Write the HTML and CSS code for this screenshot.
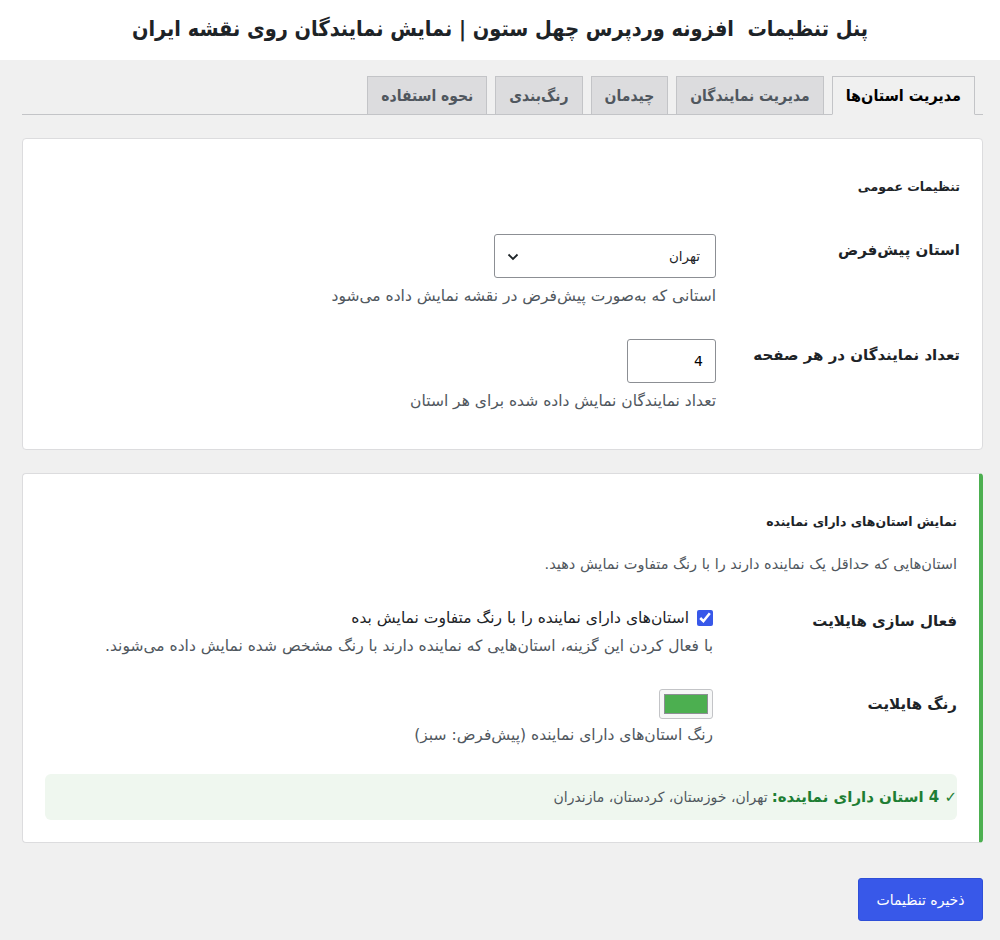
FILE: index.html
```html
<!DOCTYPE html>
<html lang="fa" dir="rtl">
<head>
    <meta charset="UTF-8">
    <title>پنل تنظیمات</title>
    <link rel="stylesheet" href="styles.css">
</head>
<body>

    <header class="page-head">
        <h1>پنل تنظیمات&nbsp; افزونه وردپرس چهل ستون | نمایش نمایندگان روی نقشه ایران</h1>
    </header>

    <main class="wrap">
        <nav class="nav-tabs">
            <a class="nav-tab active" href="#">مدیریت استان‌ها</a>
            <a class="nav-tab" href="#">مدیریت نمایندگان</a>
            <a class="nav-tab" href="#">چیدمان</a>
            <a class="nav-tab" href="#">رنگ‌بندی</a>
            <a class="nav-tab" href="#">نحوه استفاده</a>
        </nav>

        <form>
            <section class="card">
                <h2>تنظیمات عمومی</h2>

                <div class="field-row">
                    <label class="field-label" for="default-province">استان پیش‌فرض</label>
                    <div class="field-control">
                        <div class="select-box">
                            <select id="default-province">
                                <option>تهران</option>
                                <option>خوزستان</option>
                                <option>کردستان</option>
                                <option>مازندران</option>
                            </select>
                            <svg class="chevron" width="12" height="8" viewBox="0 0 12 8"><path d="M1.5 1.5 6 6l4.5-4.5" fill="none" stroke="#1d2327" stroke-width="1.8"/></svg>
                        </div>
                        <p class="desc">استانی که به‌صورت پیش‌فرض در نقشه نمایش داده می‌شود</p>
                    </div>
                </div>

                <div class="field-row">
                    <label class="field-label" for="per-page">تعداد نمایندگان در هر صفحه</label>
                    <div class="field-control">
                        <input class="num-input" id="per-page" type="text" value="4">
                        <p class="desc">تعداد نمایندگان نمایش داده شده برای هر استان</p>
                    </div>
                </div>
            </section>

            <section class="card card-accent">
                <h2>نمایش استان‌های دارای نماینده</h2>
                <p class="card-intro">استان‌هایی که حداقل یک نماینده دارند را با رنگ متفاوت نمایش دهید.</p>

                <div class="field-row row-check">
                    <span class="field-label">فعال سازی هایلایت</span>
                    <div class="field-control">
                        <label class="check-line">
                            <input type="checkbox" checked>
                            <span>استان‌های دارای نماینده را با رنگ متفاوت نمایش بده</span>
                        </label>
                        <p class="desc">با فعال کردن این گزینه، استان‌هایی که نماینده دارند با رنگ مشخص شده نمایش داده می‌شوند.</p>
                    </div>
                </div>

                <div class="field-row row-color">
                    <span class="field-label">رنگ هایلایت</span>
                    <div class="field-control">
                        <span class="color-pick"><span class="swatch"></span></span>
                        <p class="desc">رنگ استان‌های دارای نماینده (پیش‌فرض: سبز)</p>
                    </div>
                </div>

                <div class="notice">
                    <b>✓ 4 استان دارای نماینده:</b> تهران، خوزستان، کردستان، مازندران
                </div>
            </section>

            <div class="actions">
                <button type="button" class="btn-primary">ذخیره تنظیمات</button>
            </div>
        </form>
    </main>

</body>
</html>
```

FILE: styles.css
```css
html {
    background-color: #f0f0f0;
}
body {
    margin: 0;
    color: #1d2327;
    font-family: 'DejaVu Sans', 'Noto Sans', sans-serif;
    font-size: 15px;
}
.page-head {
    background-color: white;
    height: 60px;
    display: flex;
    align-items: center;
    justify-content: center;
}
.page-head h1 {
    margin: 0 0 4px 0;
    font-family: 'DejaVu Sans Condensed', 'DejaVu Sans', sans-serif;
    font-size: 21.5px;
    font-weight: bold;
    color: #1d2327;
}
.wrap {
    padding: 15px 17px 20px 22px;
}

/* tabs */
.nav-tabs {
    display: flex;
    gap: 8px;
    padding-right: 8px;
    border-bottom: 1px solid #c3c4c7;
    height: 39px;
    align-items: flex-end;
}
.nav-tab {
    display: flex;
    align-items: center;
    height: 37px;
    padding: 0 13px;
    margin-bottom: -1px;
    border: 1px solid #c3c4c7;
    background-color: #dcdcde;
    color: #50575e;
    font-family: 'DejaVu Sans Condensed', 'DejaVu Sans', sans-serif;
    font-size: 15.5px;
    font-weight: 600;
    text-decoration: none;
}
.nav-tab.active {
    background-color: #f0f0f0;
    border-bottom-color: #f0f0f0;
    color: #000;
    font-weight: bold;
    font-size: 16px;
}

/* cards */
.card {
    background-color: white;
    border: 1px solid #dcdcde;
    border-radius: 4px;
    padding: 20px 22px 22px 22px;
    margin-top: 23px;
}
.card-accent {
    border-right: 4px solid #4caf50;
}
.card h2 {
    margin: 18px 0 22px 0;
    font-size: 12.5px;
    line-height: 20px;
    font-weight: bold;
}
.card-intro {
    margin: 0 0 19px 0;
    font-size: 14.5px;
    line-height: 20px;
    color: #50575e;
}

.field-row {
    display: flex;
    padding: 15px 0 16px 0;
}
.field-row:first-of-type {
    padding-bottom: 18px;
}
.field-label {
    width: 244px;
    flex-shrink: 0;
    padding-top: 6px;
    font-size: 15px;
    font-weight: bold;
    line-height: 20px;
}
.field-control {
    flex: 1;
}
.desc {
    margin: 8px 0 0 0;
    color: #50575e;
    font-size: 15.5px;
    line-height: 20px;
}

.select-box {
    position: relative;
    width: 222px;
}
.select-box select {
    appearance: none;
    width: 100%;
    height: 44px;
    padding: 0 15px 0 40px;
    border: 1px solid #8c8f94;
    border-radius: 3px;
    background-color: white;
    font-family: inherit;
    font-size: 13.5px;
    color: #1d2327;
}
.chevron {
    position: absolute;
    left: 13px;
    top: 19px;
    pointer-events: none;
}
.num-input {
    width: 89px;
    height: 44px;
    box-sizing: border-box;
    padding: 0 12px;
    border: 1px solid #8c8f94;
    border-radius: 3px;
    font-family: inherit;
    font-size: 14px;
    text-align: right;
}

.row-check {
    padding-bottom: 19px;
}
.row-check .field-label {
    padding-top: 3px;
}
.check-line {
    display: flex;
    align-items: center;
    gap: 8px;
    height: 20px;
    line-height: 20px;
    color: #1d2327;
    font-size: 15.5px;
}
.check-line input {
    margin: 0;
    width: 16px;
    height: 16px;
    accent-color: #3858e9;
}
.row-color .field-label {
    padding-top: 5px;
}
.row-color .desc {
    margin-top: 6px;
}
.color-pick {
    display: block;
    width: 54px;
    height: 30px;
    box-sizing: border-box;
    padding: 4px;
    border: 1px solid #c3c4c7;
    border-radius: 3px;
    background-color: #f6f7f7;
}
.swatch {
    display: block;
    height: 100%;
    background-color: #4caf50;
    border: 1px solid #8c8f94;
    box-sizing: border-box;
}

.notice {
    margin-top: 13px;
    height: 46px;
    display: flex;
    align-items: center;
    gap: 4px;
    padding: 0 0 0 23px;
    background-color: #eff7ef;
    border-radius: 6px;
    color: #50575e;
    font-size: 14px;
    line-height: 20px;
}
.notice b {
    color: #1e7e34;
    font-size: 15px;
}

.actions {
    display: flex;
    padding-top: 35px;
}
.btn-primary {
    width: 125px;
    height: 43px;
    border: 1px solid #2e4fd8;
    border-radius: 3px;
    background-color: #3858e9;
    color: white;
    font-family: inherit;
    font-size: 14px;
}
```
